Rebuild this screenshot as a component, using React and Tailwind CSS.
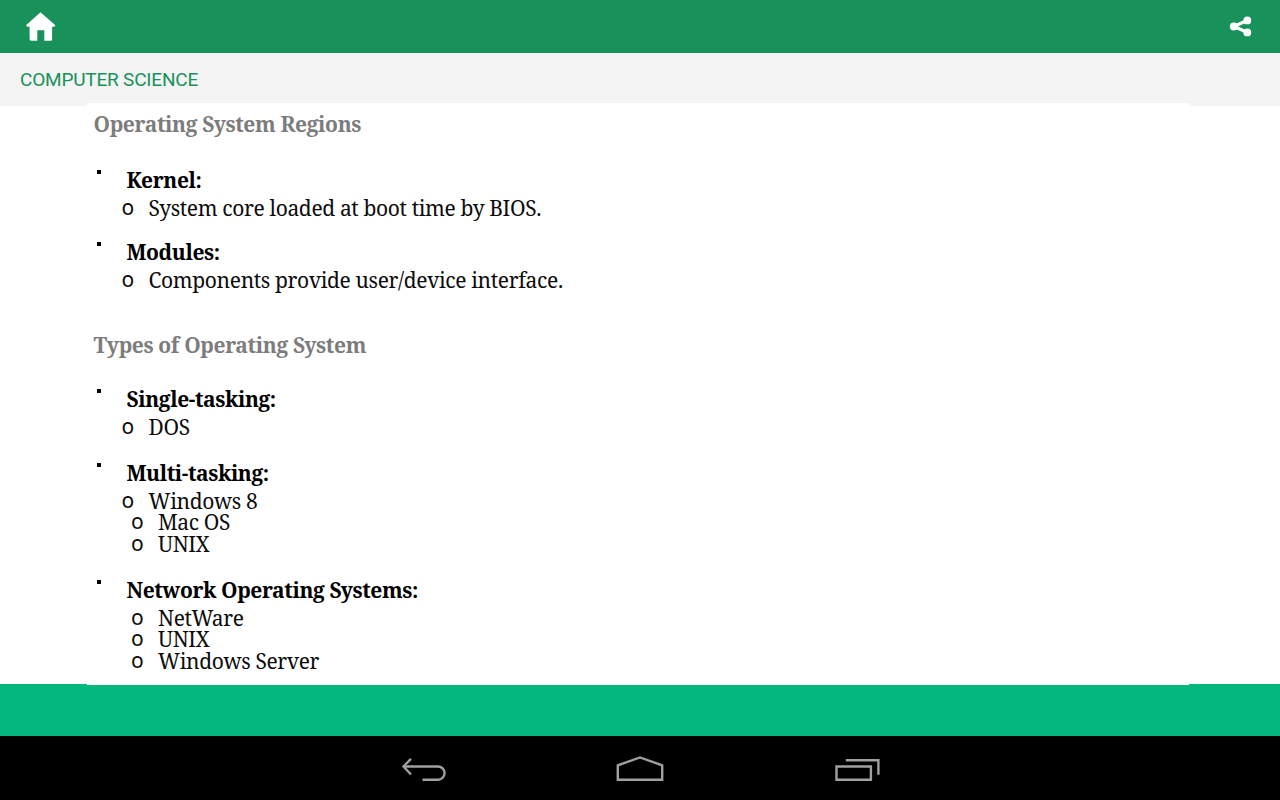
function Heading({ children, className = '' }) {
  return (
    <h2 className={`h-5 pl-[6.5px] font-bold leading-5 whitespace-nowrap text-[#7c7c7c] ${className}`}>
      {children}
    </h2>
  );
}

function Topic({ children, className }) {
  return (
    <div className={`flex h-5 pl-2.5 ${className}`}>
      <span className="h-1 w-1 bg-black" />
      <h3 className="pl-[25.5px] font-bold leading-5 tracking-[-0.4px] whitespace-nowrap">{children}</h3>
    </div>
  );
}

function Item({ children, className }) {
  return (
    <div className={`flex h-5 leading-5 text-[#0c0c0c] ${className}`}>
      <span className="w-[27px] font-['Noto_Sans',sans-serif] text-[21px] leading-[19px] tracking-normal">o</span>
      <span className="whitespace-nowrap">{children}</span>
    </div>
  );
}

export default function App() {
  return (
    <div className="flex h-[800px] w-[1280px] flex-col overflow-hidden bg-white">
      <header className="flex h-[53px] shrink-0 items-center justify-between bg-[#19915b] pr-7 pl-[25px]">
        <svg width="31" height="31" viewBox="0 0 31 31" fill="#fff" className="-mt-px">
          <path d="M15.5 1.3 1 14.2l1.2 1.6h2.4V28q0 1.8 1.8 1.8h5.9V19.3h7V29.8h6.3q1.5 0 1.5-1.6V15.8h2.2l1.1-1.6z" />
        </svg>
        <svg width="23" height="21" viewBox="0 0 23 21" fill="#fff">
          <path d="M18.5 4.3 5 10.5l13.5 6" fill="none" stroke="#fff" strokeWidth="3.2" />
          <circle cx="4.8" cy="10.5" r="3.9" />
          <circle cx="18.3" cy="4.4" r="3.9" />
          <circle cx="18.3" cy="16.4" r="3.9" />
        </svg>
      </header>

      <div className="h-[53px] shrink-0 bg-[#f4f4f4] pl-5 pt-px font-[Roboto,sans-serif] text-[19px] leading-[52px] tracking-[-0.2px] text-[#19915b]">
        COMPUTER SCIENCE
      </div>

      <div className="h-[578px] shrink-0">
        <main className="-mt-[3px] ml-[87px] flex h-[581px] w-[1102px] flex-col bg-white pt-[11px] font-['Noto_Serif','DejaVu_Serif_Condensed',serif] text-[21px] tracking-[-0.36px] text-black">
          <Heading>Operating System Regions</Heading>
          <Topic className="mt-9">Kernel:</Topic>
          <Item className="mt-2 pl-[34.5px]">System core loaded at boot time by BIOS.</Item>
          <Topic className="mt-6">Modules:</Topic>
          <Item className="mt-2 pl-[34.5px]">Components provide user/device interface.</Item>

          <Heading className="mt-[45px]">Types of Operating System</Heading>
          <Topic className="mt-[34px]">Single-tasking:</Topic>
          <Item className="mt-2 pl-[34.5px]">DOS</Item>
          <Topic className="mt-[26px]">Multi-tasking:</Topic>
          <Item className="mt-2 pl-[34.5px]">Windows 8</Item>
          <Item className="mt-px pl-11">Mac OS</Item>
          <Item className="mt-0.5 pl-11">UNIX</Item>
          <Topic className="mt-[26px]">Network Operating Systems:</Topic>
          <Item className="mt-2 pl-11">NetWare</Item>
          <Item className="mt-px pl-11">UNIX</Item>
          <Item className="mt-0.5 pl-11">Windows Server</Item>
        </main>
      </div>

      <div className="h-[52px] shrink-0 bg-[#04b77d] pr-[91px] pl-[87px]">
        <div className="h-px bg-white" />
      </div>

      <nav className="flex h-16 shrink-0 justify-center gap-[170px] bg-black pt-[18px]">
        <svg width="46" height="28" viewBox="0 0 46 28" fill="none" stroke="#a0a0a0" strokeWidth="2.4">
          <path d="M11 4.8 3.5 12.5l7.5 8" />
          <path d="M3.5 12.5H38a6.6 6.6 0 0 1 0 13.2H22.5" />
        </svg>
        <svg width="48" height="28" viewBox="0 0 48 28" fill="none" stroke="#a0a0a0" strokeWidth="2.4">
          <path d="M1.8 25.8V11.3L24 3.4l22.2 7.9v14.5z" />
        </svg>
        <svg width="46" height="28" viewBox="0 0 46 28" fill="none" stroke="#a0a0a0" strokeWidth="2.4">
          <path d="M2.5 12.5h34.4v13.3H2.5zM11.8 6.3h32.6v14.5" />
        </svg>
      </nav>
    </div>
  );
}
